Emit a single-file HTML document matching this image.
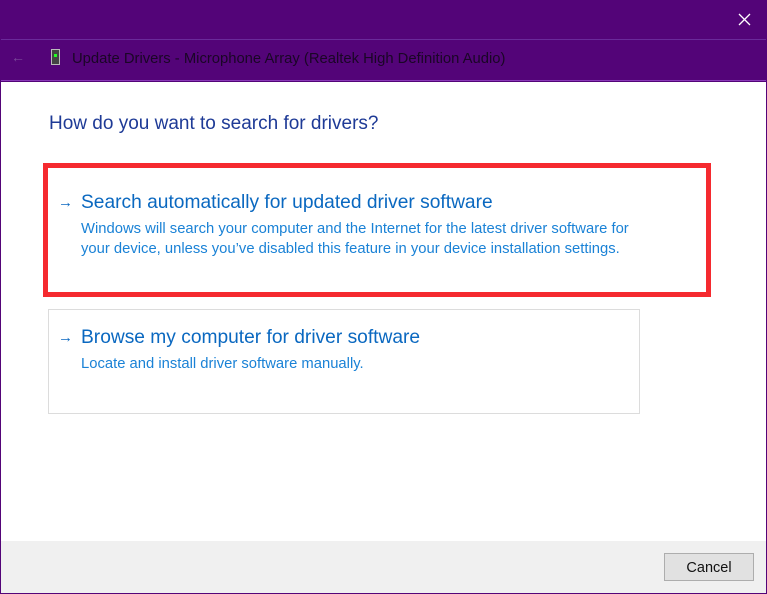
<!DOCTYPE html>
<html><head><style>
body{margin:0;width:767px;height:594px;background:#530478;position:relative;overflow:hidden;font-family:"Liberation Sans",sans-serif}
.abs{position:absolute}
#win{left:1px;top:82px;width:765px;height:459px;background:#fff}
#foot{left:1px;top:541px;width:765px;height:52px;background:#f0f0f0}
#bar2{left:1px;top:39px;width:765px;height:42px;border-top:1px solid #6a2a9a;border-bottom:1px solid #8a3ab8;box-sizing:border-box}
.blue{color:#0a68c0}
.sub{color:#1a82d6;font-size:14.8px;line-height:20px}
</style></head><body>
<div class="abs" id="bar2"></div>
<div class="abs" style="left:11px;top:49px;color:#7a4a9a;font-size:14px">←</div>
<div class="abs" style="left:51px;top:49px;width:9px;height:16px;background:#444;border:1px solid #bbb;box-sizing:border-box"><div style="width:3px;height:3px;background:#2f2;margin:4px 0 0 2px"></div></div>
<div class="abs" style="left:72px;top:51px;font-size:14.8px;color:#1a0626">Update Drivers - Microphone Array (Realtek High Definition Audio)</div>
<svg class="abs" style="left:738px;top:13px" width="13" height="13"><path d="M1 1L12 12M12 1L1 12" stroke="#fff" stroke-width="1.3"/></svg>
<div class="abs" id="win"></div>
<div class="abs" style="left:49px;top:113px;font-size:19px;color:#1e3a96">How do you want to search for drivers?</div>
<div class="abs" style="left:43px;top:163px;width:668px;height:134px;border:5px solid #f52a2f;box-sizing:border-box"></div>
<div class="abs blue" style="left:58px;top:194px;font-size:15px">→</div>
<div class="abs blue" style="left:81px;top:192px;font-size:19.2px">Search automatically for updated driver software</div>
<div class="abs sub" style="left:81px;top:219px;width:640px">Windows will search your computer and the Internet for the latest driver software for<br>your device, unless you’ve disabled this feature in your device installation settings.</div>
<div class="abs" style="left:48px;top:309px;width:592px;height:105px;border:1px solid #dcdcdc;box-sizing:border-box"></div>
<div class="abs blue" style="left:58px;top:329px;font-size:15px">→</div>
<div class="abs blue" style="left:81px;top:327px;font-size:19.2px">Browse my computer for driver software</div>
<div class="abs sub" style="left:81px;top:354px">Locate and install driver software manually.</div>
<div class="abs" id="foot"></div>
<div class="abs" style="left:664px;top:553px;width:90px;height:28px;background:#e1e1e1;border:1px solid #adadad;box-sizing:border-box;text-align:center;line-height:28px;font-size:14.5px;color:#111">Cancel</div>
</body></html>
